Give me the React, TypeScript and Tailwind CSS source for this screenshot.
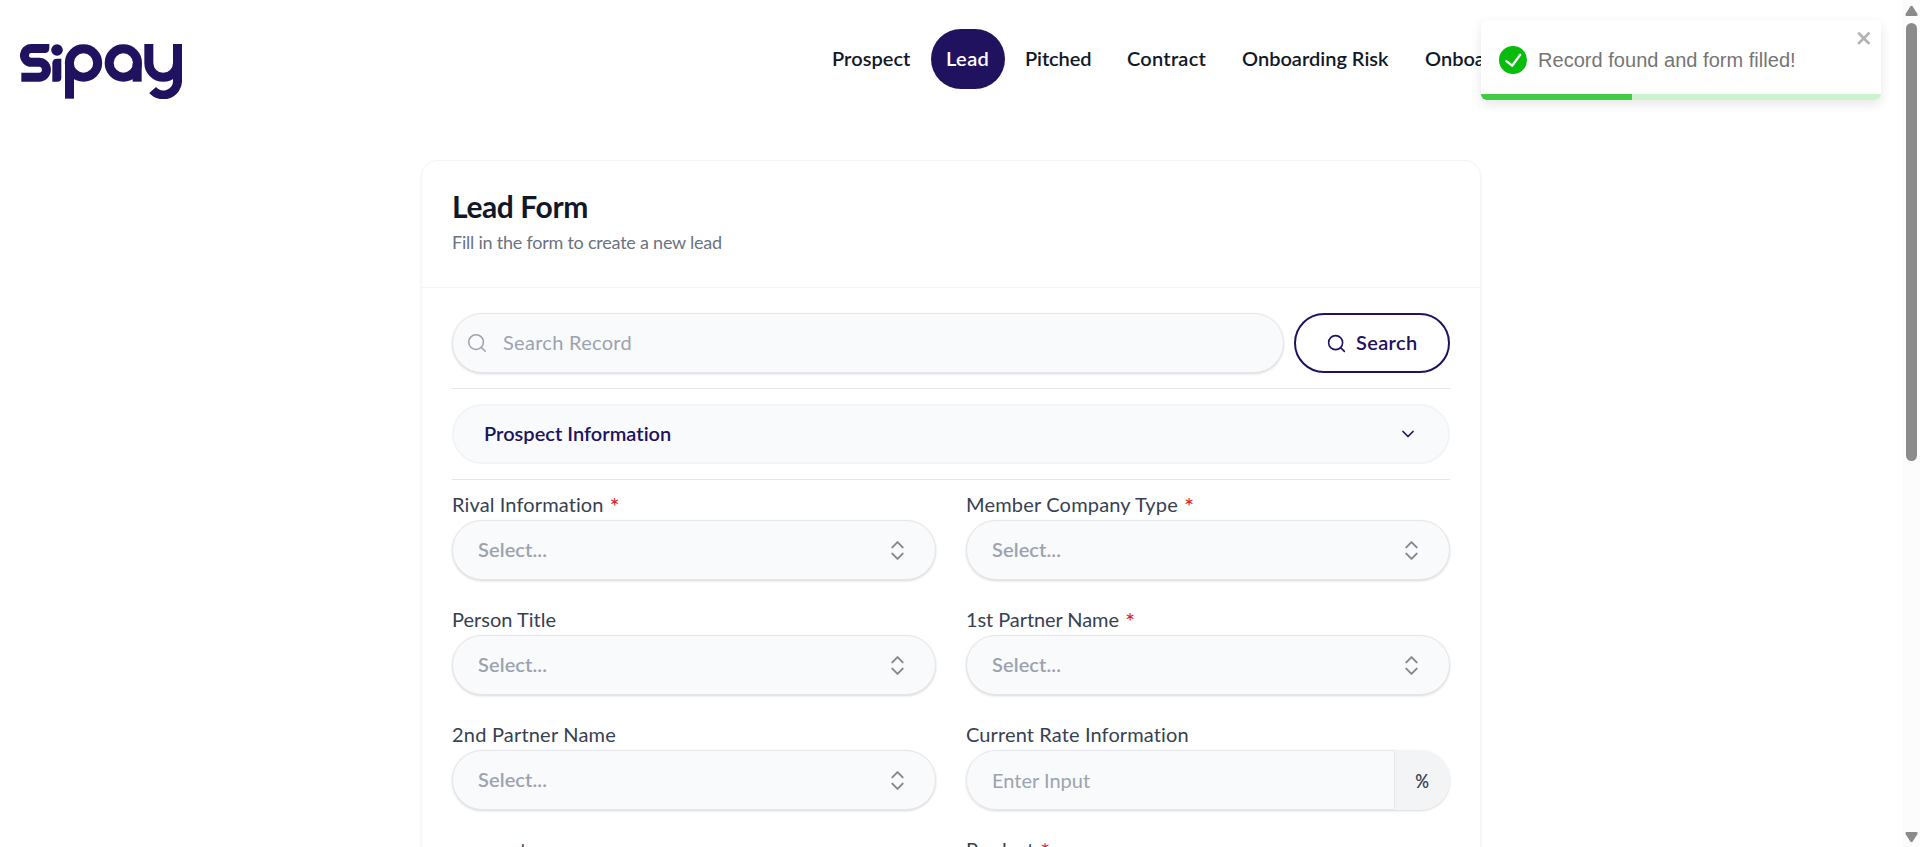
import { ChevronDown, ChevronsUpDown, Search } from 'lucide-react';

type FieldProps = {
  label: string;
  tracking?: string;
  required?: boolean;
};

const navItems = [
  { label: 'Prospect', width: 'w-[109px]', tracking: 'tracking-[0.05px]' },
  { label: 'Lead', width: 'w-[74px]', tracking: 'tracking-[0.4px]', active: true },
  { label: 'Pitched', width: 'w-[97px]', tracking: 'tracking-[-0.1px]' },
  { label: 'Contract', width: 'w-[110px]', tracking: 'tracking-[0.25px]' },
  { label: 'Onboarding Risk', width: 'w-[178px]', tracking: 'tracking-[0px]' },
  { label: 'Onboarding', width: 'w-[140px]', tracking: 'tracking-[0px]' },
];

function Logo() {
  return (
    <svg
      className="block h-[55px] w-[162px]"
      viewBox="60 72 486 165"
      fill="none"
      stroke="#20125f"
      strokeWidth="27"
      role="img"
      aria-label="Sipay"
    >
      <path d="M136 85.500H94A20.500 20.500 0 0 0 94 127H117A22 22 0 0 1 117 171.500H64" />
      <path d="M134 72H148V84Q148 99 134 99Z" fill="#20125f" stroke="none" />
      <circle cx="171" cy="90" r="17.500" fill="#20125f" stroke="none" />
      <path d="M184 116V174Q184 185 172 185H157V130Q157 116 171 116Z" fill="#20125f" stroke="none" />
      <circle cx="250.500" cy="129" r="42.500" />
      <path d="M208.500 129V236" />
      <circle cx="370" cy="129" r="42.500" />
      <path d="M411.500 129V185" />
      <path d="M446.500 72V129A43 43 0 0 0 532.500 129" />
      <path d="M532.500 72V180A42.500 42.500 0 0 1 458 210" />
    </svg>
  );
}

function Label({ label, tracking = 'tracking-normal', required }: FieldProps) {
  return (
    <div className="flex h-[30px] gap-1.5 text-[20px] leading-[28px] whitespace-nowrap text-[#374151]">
      <span className={tracking}>{label}</span>
      {required && <span className="text-[24px] leading-[31px] text-[#e11d2e]">*</span>}
    </div>
  );
}

function SelectField(props: FieldProps) {
  return (
    <div>
      <Label {...props} />
      <button className="flex h-[60px] w-full items-center justify-between rounded-[30px] border border-[#e5e7eb] bg-[#f9fafb] px-[25px] text-[20px] font-semibold shadow-[0_1px_3px_rgba(0,0,0,0.1),0_1px_2px_rgba(0,0,0,0.06)]">
        <span className="pb-[2px] tracking-[0.1px] text-[#9ca3af]">Select...</span>
        <ChevronsUpDown size={25} strokeWidth={1.9} className="text-[#868890]" />
      </button>
    </div>
  );
}

function PercentField(props: FieldProps) {
  return (
    <div>
      <Label {...props} />
      <div className="flex h-[60px] overflow-hidden rounded-[30px] bg-[#f3f4f6] shadow-[0_1px_3px_rgba(0,0,0,0.1),0_1px_2px_rgba(0,0,0,0.06)]">
        <div className="flex flex-1 items-center rounded-l-[30px] border border-[#e5e7eb] bg-[#f9fafb] px-[25px] text-[20px] text-[#9ca3af]">
          Enter Input
        </div>
        <div className="flex w-[55px] items-center justify-center text-[20px] font-semibold text-[#374151]">
          <span className="scale-x-[0.85]">%</span>
        </div>
      </div>
    </div>
  );
}

function Toast() {
  return (
    <div className="absolute top-5 left-[1481px] flex h-20 w-[400px] items-center overflow-visible rounded-md bg-white pl-[18px] font-['Liberation_Sans',sans-serif] text-[20px] text-[#757575] shadow-[0_4px_12px_rgba(0,0,0,0.1)]">
      <svg className="size-7 shrink-0" viewBox="0 0 24 24" fill="#07bc0c">
        <path d="M12 0a12 12 0 1012 12A12.014 12.014 0 0012 0zm6.927 8.2l-6.845 9.289a1.011 1.011 0 01-1.43.188l-4.888-3.908a1 1 0 111.25-1.562l4.076 3.261 6.227-8.451a1 1 0 111.61 1.183z" />
      </svg>
      <span className="ml-[11px] tracking-[0.03px] whitespace-nowrap">Record found and form filled!</span>
      <svg className="absolute top-[8px] right-[8px] h-5 w-[17.5px]" viewBox="0 0 14 16" fill="#b2b2b2">
        <path d="M7.71 8.23l3.75 3.75-1.48 1.48-3.75-3.75-3.75 3.75L1 11.98l3.75-3.75L1 4.48 2.48 3l3.75 3.75L9.98 3l1.48 1.48-3.75 3.75z" />
      </svg>
      <div className="absolute inset-x-0 bottom-0 h-[6px] overflow-hidden rounded-b-md bg-[#cdf2ce]">
        <div className="h-full w-[151px] bg-[#40cc44]" />
      </div>
    </div>
  );
}

function Scrollbar() {
  return (
    <div className="flex h-full w-[17px] flex-col items-center bg-[#fcfcfc] pr-px">
      <svg className="mt-[5px] h-[11px] w-[13px] shrink-0" viewBox="0 0 13 11" fill="#8b8b8b">
        <path d="M5.300 1.500Q6.500 0 7.700 1.500L12.500 9Q13 11 11.500 11H1.500Q0 11 .500 9Z" />
      </svg>
      <div className="mt-[7px] h-[438px] w-[11px] shrink-0 rounded-full bg-[#8b8b8b]" />
      <svg className="mt-auto mb-[4px] h-[11px] w-[13px] shrink-0" viewBox="0 0 13 11" fill="#8b8b8b">
        <path d="M5.300 9.500Q6.500 11 7.700 9.500L12.500 2Q13 0 11.500 0H1.500Q0 0 .500 2Z" />
      </svg>
    </div>
  );
}

export default function App() {
  return (
    <div className="relative flex h-[847px] w-full overflow-hidden bg-white font-['Lato',sans-serif]">
      <div className="flex flex-1 flex-col">
        <header className="flex h-[160px] shrink-0 items-start">
          <div className="w-[817px] shrink-0 pt-[44px] pl-[20px]">
            <Logo />
          </div>
          <nav className="flex gap-[5px] pt-[29px]">
            {navItems.map((item) => (
              <a
                key={item.label}
                className={`flex h-[60px] shrink-0 items-center rounded-[30px] pb-[2px] pl-[15px] text-[20px] font-semibold whitespace-nowrap ${item.width} ${item.tracking} ${
                  item.active ? 'bg-[#20125f] text-white' : 'text-[#111827]'
                }`}
              >
                {item.label}
              </a>
            ))}
          </nav>
        </header>

        <main className="ml-[421px] h-[900px] w-[1060px] shrink-0 rounded-2xl border border-[#f3f4f6] shadow-[0_1px_3px_rgba(0,0,0,0.06)]">
          <div className="h-[127px] border-b border-[#f3f4f6] px-[30px] pt-[26px]">
            <h1 className="text-[30px] leading-[38px] font-bold tracking-[-0.4px] text-[#111827]">Lead Form</h1>
            <p className="mt-[2px] text-[18px] leading-[30px] tracking-[-0.23px] text-[#6b7280]">
              Fill in the form to create a new lead
            </p>
          </div>

          <div className="px-[30px] pt-[25px]">
            <div className="flex gap-[10px]">
              <div className="flex h-[60px] flex-1 items-center rounded-[30px] border border-[#e5e7eb] bg-[#f9fafb] pl-[13px] text-[20px] text-[#9ca3af] shadow-[0_1px_3px_rgba(0,0,0,0.1),0_1px_2px_rgba(0,0,0,0.06)]">
                <Search size={22} strokeWidth={1.7} />
                <span className="ml-[15px] pb-[2px] tracking-[0.29px]">Search Record</span>
              </div>
              <button className="flex h-[60px] w-[156px] items-center rounded-[30px] border-2 border-[#20125f] bg-white pl-[30px] text-[20px] font-semibold text-[#20125f]">
                <Search size={21} strokeWidth={1.8} />
                <span className="ml-[9px] pb-[2px] tracking-[0.35px]">Search</span>
              </button>
            </div>

            <div className="my-[15px] h-px bg-[#e5e7eb]" />

            <button className="flex h-[60px] w-full items-center justify-between rounded-[30px] border-2 border-[#f3f4f8] bg-[#f9fafc] px-[30px] text-[20px] font-semibold text-[#20125f]">
              <span className="pb-[2px] tracking-[0.03px]">Prospect Information</span>
              <ChevronDown size={20} strokeWidth={2} />
            </button>

            <div className="mt-[15px] mb-[10px] h-px bg-[#e5e7eb]" />

            <div className="grid grid-cols-2 gap-x-[30px] gap-y-[25px]">
              <SelectField label="Rival Information" tracking="tracking-[0.12px]" required />
              <SelectField label="Member Company Type" tracking="tracking-[0.18px]" required />
              <SelectField label="Person Title" />
              <SelectField label="1st Partner Name" tracking="tracking-[-0.08px]" required />
              <SelectField label="2nd Partner Name" tracking="tracking-[0.2px]" />
              <PercentField label="Current Rate Information" tracking="tracking-[0.12px]" />
              <SelectField label="segment" />
              <SelectField label="Product" tracking="tracking-[-0.16px]" required />
            </div>
          </div>
        </main>
      </div>
      <Scrollbar />
      <Toast />
    </div>
  );
}
